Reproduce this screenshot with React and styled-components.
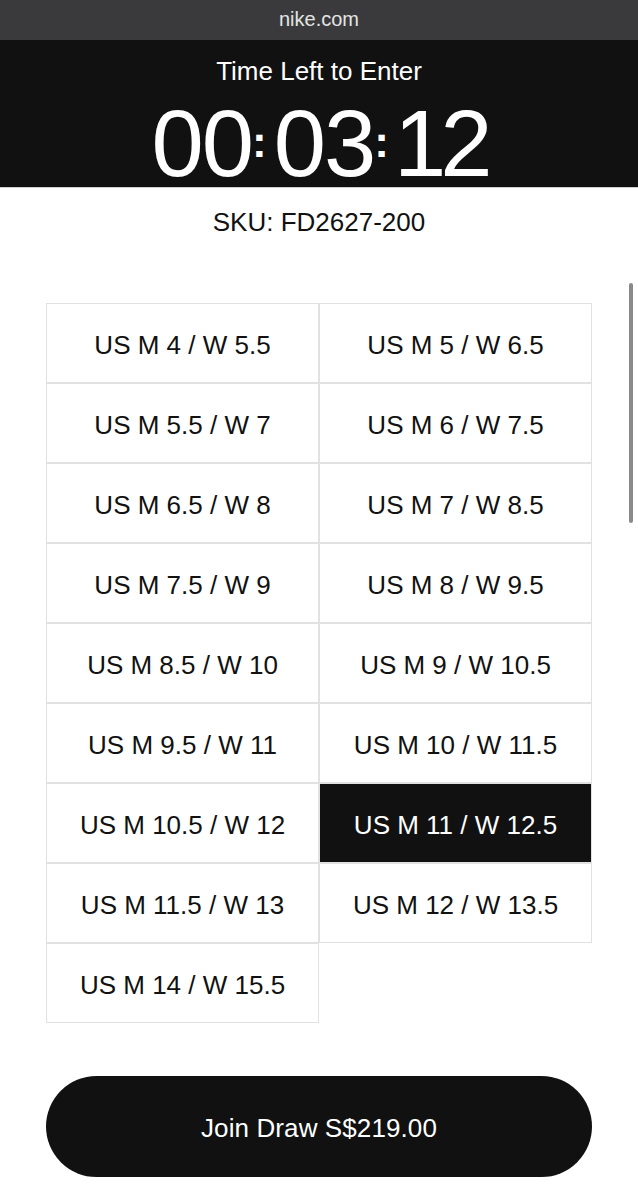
import React from "react";
import styled, { createGlobalStyle } from "styled-components";

const Global = createGlobalStyle`
  html, body { margin: 0; padding: 0; background: #ffffff; }
  body { font-family: "Liberation Sans", Arial, sans-serif; color: #111111; }
`;

const Page = styled.div`
  position: relative;
  width: 638px;
  min-height: 1200px;
  display: flex;
  flex-direction: column;
  background: #ffffff;
`;

const AddressBar = styled.div`
  height: 40px;
  background: #3a3a3c;
  color: #e4e4e4;
  font-size: 20px;
  line-height: 38px;
  text-align: center;
`;

const Header = styled.header`
  background: #111111;
  color: #ffffff;
  padding-top: 16px;
  height: 148px;
  box-sizing: border-box;
  display: flex;
  flex-direction: column;
  align-items: center;
  border-bottom: 1px solid #cfcfcf;
`;

const Title = styled.div`
  font-size: 26px;
  line-height: 30px;
`;

const Timer = styled.div`
  margin-top: 14px;
  font-size: 94px;
  line-height: 88px;
  white-space: nowrap;
`;

const Group = styled.span`
  display: inline-block;
  letter-spacing: ${(p) => p.$ls}px;
`;

const Colon = styled.span`
  display: inline-block;
  font-size: 44px;
  font-weight: 700;
  line-height: 1;
  letter-spacing: 0;
  vertical-align: 19px;
  margin-right: ${(p) => p.$right}px;
`;

const Sku = styled.div`
  margin-top: 19px;
  font-size: 26px;
  line-height: 30px;
  text-align: center;
`;

const SizeGrid = styled.div`
  margin-top: 66px;
  display: grid;
  grid-template-columns: 273px 273px;
  grid-auto-rows: 80px;
  justify-content: center;
`;

const SizeCell = styled.button`
  box-sizing: border-box;
  border: 1px solid #e1e1e1;
  background: ${(p) => (p.$selected ? "#111111" : "#ffffff")};
  color: ${(p) => (p.$selected ? "#ffffff" : "#111111")};
  font-family: "Liberation Sans", Arial, sans-serif;
  font-size: 26px;
  padding: 4px 0 0;
  margin: 0;
  display: flex;
  align-items: center;
  justify-content: center;
  cursor: pointer;
`;

const JoinButton = styled.button`
  margin: 53px auto 0;
  width: 546px;
  height: 101px;
  padding: 3px 0 0;
  border: none;
  border-radius: 51px;
  background: #111111;
  color: #ffffff;
  font-family: "Liberation Sans", Arial, sans-serif;
  font-size: 26px;
  letter-spacing: 0.1px;
  cursor: pointer;
`;

const ScrollThumb = styled.div`
  position: absolute;
  left: 629px;
  top: 283px;
  width: 4px;
  height: 240px;
  border-radius: 2px;
  background: #8a8a8a;
`;

const sizes = [
  "US M 4 / W 5.5",
  "US M 5 / W 6.5",
  "US M 5.5 / W 7",
  "US M 6 / W 7.5",
  "US M 6.5 / W 8",
  "US M 7 / W 8.5",
  "US M 7.5 / W 9",
  "US M 8 / W 9.5",
  "US M 8.5 / W 10",
  "US M 9 / W 10.5",
  "US M 9.5 / W 11",
  "US M 10 / W 11.5",
  "US M 10.5 / W 12",
  "US M 11 / W 12.5",
  "US M 11.5 / W 13",
  "US M 12 / W 13.5",
  "US M 14 / W 15.5",
];

export default function App() {
  const selected = "US M 11 / W 12.5";
  return (
    <Page>
      <Global />
      <AddressBar>nike.com</AddressBar>
      <Header>
        <Title>Time Left to Enter</Title>
        <Timer>
          <Group $ls={-2}>00</Group>
          <Colon $right={7}>:</Colon>
          <Group $ls={-2}>03</Group>
          <Colon $right={5}>:</Colon>
          <Group $ls={-6}>12</Group>
        </Timer>
      </Header>
      <Sku>SKU: FD2627-200</Sku>
      <SizeGrid>
        {sizes.map((s) => (
          <SizeCell key={s} $selected={s === selected}>
            {s}
          </SizeCell>
        ))}
      </SizeGrid>
      <JoinButton>Join Draw S$219.00</JoinButton>
      <ScrollThumb />
    </Page>
  );
}
